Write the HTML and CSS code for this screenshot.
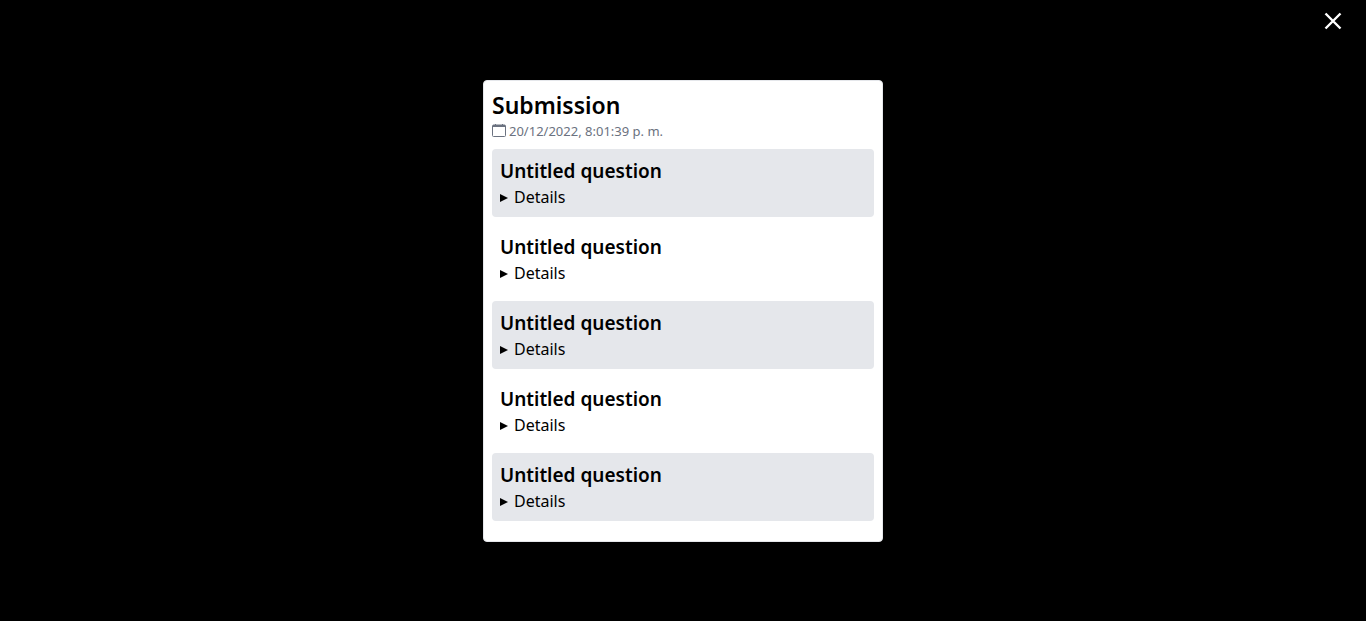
FILE: index.html
```html
<!DOCTYPE html>
<html lang="en">
<head>
<meta charset="utf-8">
<title>Submission</title>
<link rel="stylesheet" href="styles.css">
</head>
<body>
<button class="close" type="button" aria-label="Close"><svg viewBox="0 0 18 18" width="18" height="18" fill="none" stroke="currentColor" stroke-width="2.4"><path d="M1.5 1.5l15 15M16.5 1.5l-15 15"/></svg></button>
<main class="card">
<h1 class="title">Submission</h1>
<p class="date"><svg class="calendar" viewBox="0 0 14 14" width="14" height="14" fill="none" stroke="currentColor"><rect x=".5" y="1" width="13" height="11.5" rx="1"/><path d="M1 2h12" stroke-width="2"/><path d="M3.5 0v1M10.5 0v1"/></svg><time>20/12/2022, 8:01:39 p. m.</time></p>
<ul class="questions">
<li class="question"><h2 class="question-title">Untitled question</h2><details><summary>Details</summary></details></li>
<li class="question"><h2 class="question-title">Untitled question</h2><details><summary>Details</summary></details></li>
<li class="question"><h2 class="question-title">Untitled question</h2><details><summary>Details</summary></details></li>
<li class="question"><h2 class="question-title">Untitled question</h2><details><summary>Details</summary></details></li>
<li class="question"><h2 class="question-title">Untitled question</h2><details><summary>Details</summary></details></li>
</ul>
</main>
</body>
</html>
```
FILE: styles.css
```css
* { box-sizing: border-box; }
body {
  margin: 0;
  min-height: 100vh;
  display: flex;
  align-items: center;
  justify-content: center;
  background: #000;
  color: #000;
  font: 16px/24px "Noto Sans", sans-serif;
}
h1, h2, p, ul { margin: 0; padding: 0; }
.close {
  position: absolute;
  top: 12px;
  right: 24px;
  padding: 0;
  border: 0;
  background: none;
  color: #fff;
  line-height: 0;
  cursor: pointer;
}
.card {
  width: 100%;
  max-width: 400px;
  padding: 8px 8px 20px;
  border: 1px solid #e5e7eb;
  border-radius: 4px;
  background: #fff;
}
.title { font-size: 23px; line-height: 32px; font-weight: 600; }
.date {
  display: flex;
  align-items: center;
  gap: 3px;
  color: #6b7280;
  font-size: 13px;
  line-height: 20px;
}
.questions {
  display: grid;
  gap: 8px;
  margin-top: 8px;
  list-style: none;
}
.question { padding: 8px; border-radius: 4px; }
.question:nth-child(odd) { background: #e5e7eb; }
.question-title { font-size: 19px; line-height: 28px; font-weight: 600; }
summary {
  display: flex;
  align-items: center;
  gap: 6px;
  list-style: none;
  cursor: pointer;
}
summary::before {
  content: "";
  margin-top: 2px;
  border: 4px solid transparent;
  border-left: 8px solid #000;
  border-right: 0;
}
details[open] summary::before { transform: rotate(90deg); }
```
